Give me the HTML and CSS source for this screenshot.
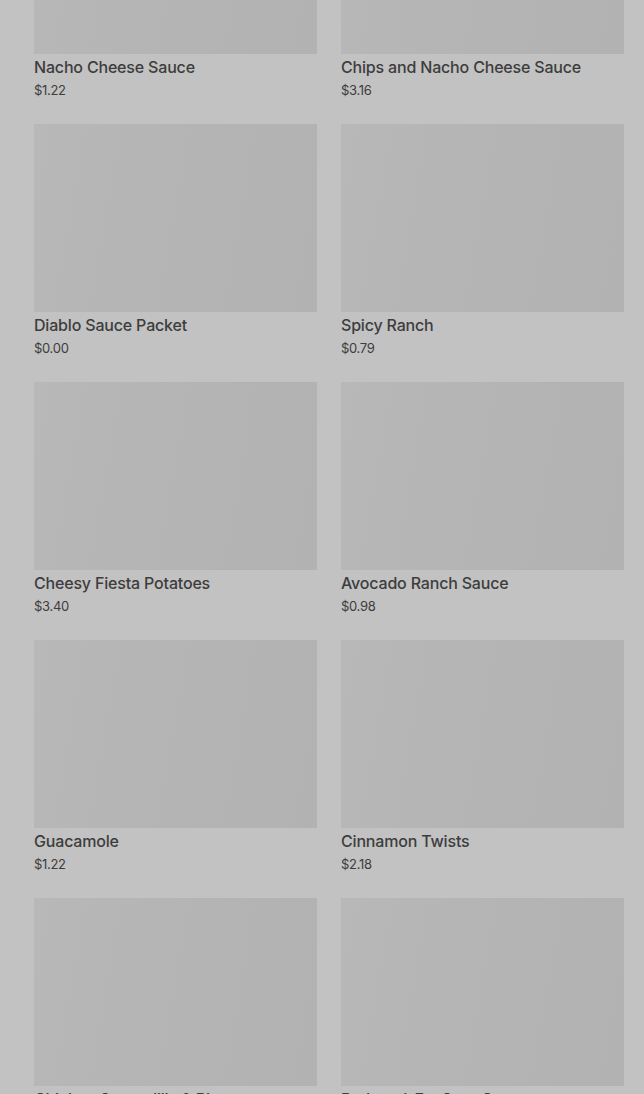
FILE: index.html
```html
<!DOCTYPE html>
<html>
<head>
    <title>Sides</title>
    <link rel="stylesheet" href="styles.css">
</head>
<body>
    <div class="menu-grid">
        <div class="item">
            <div class="item-photo"></div>
            <h3 class="item-name">Nacho Cheese Sauce</h3>
            <p class="item-price">$1.22</p>
        </div>
        <div class="item">
            <div class="item-photo"></div>
            <h3 class="item-name">Chips and Nacho Cheese Sauce</h3>
            <p class="item-price">$3.16</p>
        </div>
        <div class="item">
            <div class="item-photo"></div>
            <h3 class="item-name">Diablo Sauce Packet</h3>
            <p class="item-price">$0.00</p>
        </div>
        <div class="item">
            <div class="item-photo"></div>
            <h3 class="item-name">Spicy Ranch</h3>
            <p class="item-price">$0.79</p>
        </div>
        <div class="item">
            <div class="item-photo"></div>
            <h3 class="item-name">Cheesy Fiesta Potatoes</h3>
            <p class="item-price">$3.40</p>
        </div>
        <div class="item">
            <div class="item-photo"></div>
            <h3 class="item-name">Avocado Ranch Sauce</h3>
            <p class="item-price">$0.98</p>
        </div>
        <div class="item">
            <div class="item-photo"></div>
            <h3 class="item-name">Guacamole</h3>
            <p class="item-price">$1.22</p>
        </div>
        <div class="item">
            <div class="item-photo"></div>
            <h3 class="item-name">Cinnamon Twists</h3>
            <p class="item-price">$2.18</p>
        </div>
        <div class="item">
            <div class="item-photo"></div>
            <h3 class="item-name">Chicken Quesadilla &amp; Rice</h3>
            <p class="item-price">$4.29</p>
        </div>
        <div class="item">
            <div class="item-photo"></div>
            <h3 class="item-name">Reduced-Fat Sour Cream</h3>
            <p class="item-price">$0.59</p>
        </div>
    </div>
</body>
</html>
```

FILE: styles.css
```css
/* page */
body {
    margin: 0;
    padding: 0;
    background-color: #c2c2c2;
    font-family: Inter, "Liberation Sans", sans-serif;
    color: #3d3d3d;
    overflow: hidden;
}

/* two column grid of menu items */
.menu-grid {
    display: grid;
    grid-template-columns: 283px 283px;
    column-gap: 24px;
    row-gap: 24px;
    padding: 0 20px 0 34px;
    margin-top: -134px;
}

.item {
    display: flex;
    flex-direction: column;
}

.item-photo {
    height: 188px;
    background: linear-gradient(100deg, #b8b8b8 0%, #b4b4b4 50%, #b2b2b2 100%);
}

.item-name {
    margin: 3px 0 0 0;
    font-size: 16px;
    line-height: 20px;
    font-weight: 500;
    letter-spacing: -0.18px;
}

.item-price {
    margin: 3px 0 0 0;
    font-size: 13px;
    line-height: 20px;
    font-weight: 400;
    letter-spacing: -0.3px;
}
```
